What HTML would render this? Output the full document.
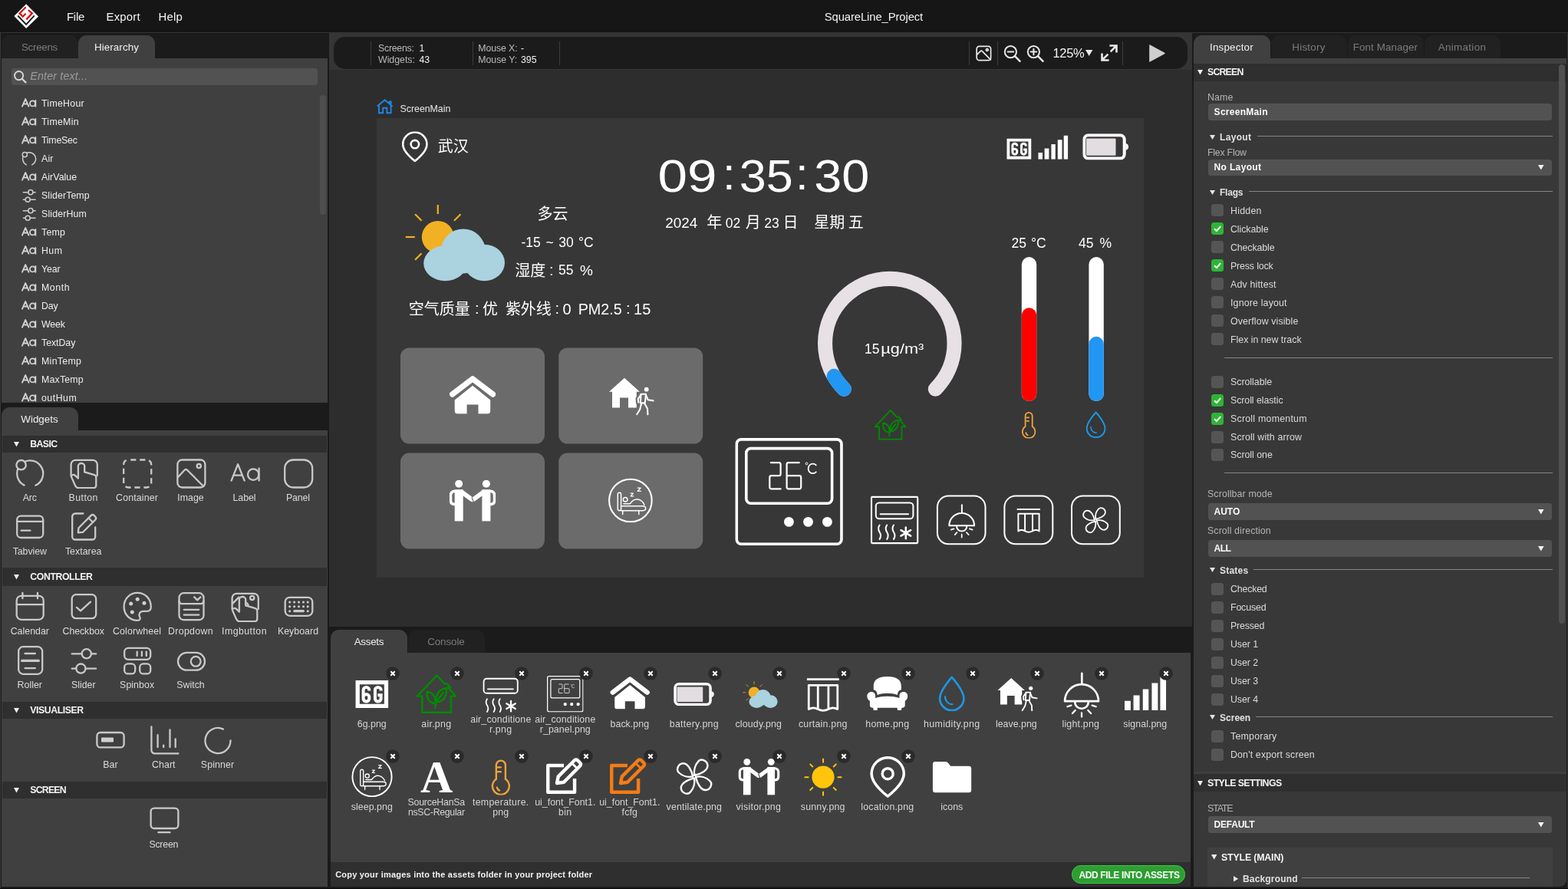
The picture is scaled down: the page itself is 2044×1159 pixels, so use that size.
<!DOCTYPE html>
<html lang="en"><head><meta charset="utf-8"><title>SquareLine_Project</title>
<style>
html,body{margin:0;padding:0;background:#191919;}
body{width:2044px;height:1159px;position:relative;overflow:hidden;filter:opacity(1);font-family:"Liberation Sans",sans-serif;}
.t{position:absolute;white-space:nowrap;margin:0;padding:0;}
.b{position:absolute;display:block;overflow:visible;}
svg{overflow:visible;}
</style></head><body>
<svg width="0" height="0" style="position:absolute;left:-10px;top:-10px"><defs><symbol id="w-arc" viewBox="0 0 40 40"><g fill="none" stroke-linecap="round" stroke-linejoin="round"><path d="M12.6 35.6A17 17 0 1 1 27.4 35.8"/><circle cx="8.6" cy="9.2" r="6.2" fill="#404040"/></g></symbol><symbol id="w-button" viewBox="0 0 40 40"><g fill="none" stroke-linecap="round" stroke-linejoin="round"><path d="M3.6 23.5V8.8a6 6 0 0 1 6-6H31.8a6 6 0 0 1 6 6V23"/><path d="M12.9 26.6V10.6a4.15 3.6 0 0 1 8.3 0V18.4L33.9 22.2q2.4 .8 2.4 3.4V35.4q0 3.7-3.7 3.7H13.2q-2.7 0-3.9-2.5L4.4 25.6q-1-2.9 1.6-3.6 1.6-.4 3 .9Z"/></g></symbol><symbol id="w-container" viewBox="0 0 40 40"><g fill="none" stroke-linecap="round" stroke-linejoin="round"><rect x="2.2" y="2.5" width="36" height="36" rx="6" stroke-dasharray="7.2 4.8" stroke-dashoffset="-3" stroke-linecap="butt"/></g></symbol><symbol id="w-image" viewBox="0 0 40 40"><g fill="none" stroke-linecap="round" stroke-linejoin="round"><rect x="2.4" y="2.5" width="36" height="36" rx="6"/><circle cx="30.3" cy="10.6" r="2.6"/><path d="M2.9 25.2L11.6 15.8q1.7-1.7 3.4 0L36.3 37"/></g></symbol><symbol id="w-label" viewBox="0 0 40 40"><g fill="none" stroke-linecap="round" stroke-linejoin="round"><path d="M2.6 29.6L11.1 8.2L19.7 29.6M5.4 22.6H16.8"/><circle cx="31.2" cy="21.6" r="7.2"/><path d="M38.6 13.6V29.6"/></g></symbol><symbol id="w-panel" viewBox="0 0 40 40"><g fill="none" stroke-linecap="round" stroke-linejoin="round"><rect x="2.2" y="2.5" width="36" height="36" rx="11"/></g></symbol><symbol id="w-tabview" viewBox="0 0 40 40"><g fill="none" stroke-linecap="round" stroke-linejoin="round"><rect x="3.2" y="5.6" width="34" height="28.4" rx="5"/><path d="M3.2 12.8H37.2M8.6 24.7H20.4"/></g></symbol><symbol id="w-textarea" viewBox="0 0 40 40"><g fill="none" stroke-linecap="round" stroke-linejoin="round"><path d="M19.4 2.5H9.2a4 4 0 0 0-4 4V32.5a4 4 0 0 0 4 4H31.2a4 4 0 0 0 4-4V20.4"/><path d="M12.8 27.4l.7-6.2L29.6 5.1a3 3 0 0 1 4.2 0l1.4 1.4a3 3 0 0 1 0 4.2L19.1 26.8Z"/><path d="M26.4 8.2l5.6 5.6"/></g></symbol><symbol id="w-calendar" viewBox="0 0 40 40"><g fill="none" stroke-linecap="round" stroke-linejoin="round"><rect x="2.7" y="5.8" width="35" height="31" rx="6"/><path d="M2.7 17.1H37.7M10.4 2V9.2M30 2V9.2"/></g></symbol><symbol id="w-checkbox" viewBox="0 0 40 40"><g fill="none" stroke-linecap="round" stroke-linejoin="round"><rect x="4.7" y="4.2" width="31.5" height="31" rx="5.5"/><path d="M10.9 20.9L16 25.4L29 13.6"/></g></symbol><symbol id="w-colorwheel" viewBox="0 0 40 40"><g fill="none" stroke-linecap="round" stroke-linejoin="round"><path d="M20.2 1.9C9.8 1.9 2.6 10 2.6 20C2.6 30.4 10.6 37.9 20.2 37.9C23.2 37.9 24.6 36 23.2 33.4C21.2 29.8 23.4 25.8 27.8 25.8H32.6C36 25.8 37.8 23.6 37.8 20.2C37.8 9.8 30.4 1.9 20.2 1.9Z"/><g fill="#d0d0d0" stroke="none"><circle cx="20.2" cy="10.2" r="2.5"/><circle cx="11.7" cy="16.1" r="2.5"/><circle cx="29" cy="15.2" r="2.5"/><circle cx="13.3" cy="26.9" r="2.5"/></g></g></symbol><symbol id="w-dropdown" viewBox="0 0 40 40"><g fill="none" stroke-linecap="round" stroke-linejoin="round"><rect x="4.5" y="2.2" width="32" height="35" rx="6"/><path d="M4.5 12.6q0 3.6 3.6 3.6H32.9q3.6 0 3.6-3.6M24.2 7.4L28.3 11.4L32.4 7.4M10.7 23.8H30.3M10.7 30.6H30.3"/></g></symbol><symbol id="w-imgbutton" viewBox="0 0 40 40"><g fill="none" stroke-linecap="round" stroke-linejoin="round"><path d="M3.6 23.5V8.8a6 6 0 0 1 6-6H31.8a6 6 0 0 1 6 6V23"/><path d="M12.9 26.6V10.6a4.15 3.6 0 0 1 8.3 0V18.4L33.9 22.2q2.4 .8 2.4 3.4V35.4q0 3.7-3.7 3.7H13.2q-2.7 0-3.9-2.5L4.4 25.6q-1-2.9 1.6-3.6 1.6-.4 3 .9Z" fill="#404040"/><path d="M4.4 15.6L12.4 7.6M21.4 14.2q2.6 1.4 3.2 3.8"/><circle cx="29.7" cy="8.4" r="2.6"/></g></symbol><symbol id="w-keyboard" viewBox="0 0 40 40"><g fill="none" stroke-linecap="round" stroke-linejoin="round"><rect x="2.7" y="7.8" width="35.6" height="24" rx="6"/><path d="M14.8 25.7H26.4" stroke-width="3.2"/><g fill="#d0d0d0" stroke="none"><circle cx="8.7" cy="14" r="1.5"/><circle cx="14.6" cy="14" r="1.5"/><circle cx="20.5" cy="14" r="1.5"/><circle cx="26.5" cy="14" r="1.5"/><circle cx="32.2" cy="14" r="1.5"/><circle cx="8.7" cy="19.8" r="1.5"/><circle cx="14.6" cy="19.8" r="1.5"/><circle cx="20.5" cy="19.8" r="1.5"/><circle cx="26.5" cy="19.8" r="1.5"/><circle cx="32.2" cy="19.8" r="1.5"/><circle cx="8.7" cy="25.7" r="1.5"/><circle cx="32.2" cy="25.7" r="1.5"/></g></g></symbol><symbol id="w-roller" viewBox="0 0 40 40"><g fill="none" stroke-linecap="round" stroke-linejoin="round"><rect x="5.2" y="2.2" width="31" height="35.6" rx="6"/><path d="M13.5 11H26.9M13.5 30.1H26.9"/><path d="M9.6 20.4H31.4" stroke-width="3.2"/></g></symbol><symbol id="w-slider" viewBox="0 0 40 40"><g fill="none" stroke-linecap="round" stroke-linejoin="round"><path d="M4.7 11.3H17.6M30 11.3H36.2M4.7 30.6H10.2M22.6 30.6H36.2"/><circle cx="23.8" cy="11.3" r="6.1"/><circle cx="16.4" cy="30.6" r="6.1"/></g></symbol><symbol id="w-spinbox" viewBox="0 0 40 40"><g fill="none" stroke-linecap="round" stroke-linejoin="round"><rect x="3.2" y="3.8" width="34" height="15" rx="5"/><path d="M19.7 8.6V14M25.9 8.6V14M31.8 8.6V14"/><rect x="3.2" y="24.4" width="14" height="13" rx="4.5"/><rect x="23.2" y="24.4" width="14" height="13" rx="4.5"/></g></symbol><symbol id="w-switch" viewBox="0 0 40 40"><g fill="none" stroke-linecap="round" stroke-linejoin="round"><rect x="3" y="9.9" width="35" height="22.8" rx="11.4"/><circle cx="26.2" cy="21.3" r="6.4"/></g></symbol><symbol id="w-bar" viewBox="0 0 40 40"><g fill="none" stroke-linecap="round" stroke-linejoin="round"><rect x="2.4" y="10" width="35.2" height="19.4" rx="4.5"/><rect x="8" y="16.6" width="16" height="5.8" rx="1" fill="#d0d0d0" stroke="none"/></g></symbol><symbol id="w-chart" viewBox="0 0 40 40"><g fill="none" stroke-linecap="round" stroke-linejoin="round"><path d="M3.4 2.4V33a4.4 4.4 0 0 0 4.4 4.4H38.4M11.6 13.2V29M19.2 26.6V29M27.5 6.4V29M34.7 18.4V29"/></g></symbol><symbol id="w-spinner" viewBox="0 0 40 40"><g fill="none" stroke-linecap="round" stroke-linejoin="round"><path d="M36.5 20.5A16.5 16.5 0 1 1 27 5.6"/></g></symbol><symbol id="w-screen" viewBox="0 0 40 40"><g fill="none" stroke-linecap="round" stroke-linejoin="round"><rect x="2.6" y="4.6" width="35.8" height="26.4" rx="4.5"/><path d="M12.4 36.2H27.6"/></g></symbol><symbol id="h-label" viewBox="0 0 20 12"><g fill="none" stroke-linecap="round" stroke-linejoin="round"><path d="M1 10.7L5.2 1.1L9.4 10.7M2.6 7.5H7.8"/><circle cx="14.5" cy="6.9" r="3.5"/><path d="M18.3 3V10.7"/></g></symbol><symbol id="s-6g" viewBox="0 0 32.2 27.3"><path fill-rule="evenodd" fill="#fff" d="M0 0H32.2V27.3H0ZM4 4V23.3H28.2V4Z"/><g fill="none" stroke="#fff" stroke-width="3"><path d="M13.4 10.2V9.4a2.9 2.6 0 0 0-5.8 0V18.2a2.9 2.6 0 0 0 5.8 0V16.2a2.9 2.4 0 0 0-5.8 0"/><path d="M25 10.2V9.4a2.9 2.6 0 0 0-5.8 0V18.2a2.9 2.6 0 0 0 5.8 0V14.6H21.8"/></g></symbol><symbol id="s-signal" viewBox="0 0 39 31.3"><path fill="#fff" d="M0 22.5h5.7v8.8H0zM8.3 17.2h5.8v14.1H8.3zM17.1 11.5h5.4v19.8h-5.4zM25.5 5.8h5.7v25.5h-5.7zM33.4 0h5.6v31.3h-5.6z"/></symbol><symbol id="s-battery" viewBox="0 0 60 34.4"><rect x="2" y="2" width="52.4" height="30.4" rx="5.5" fill="none" stroke="#fff" stroke-width="4"/><path d="M56 12.6q3.8 1.2 3.8 4.6t-3.8 4.6z" fill="#fff"/><rect x="4.8" y="6.4" width="38.4" height="22.2" rx="1" fill="#e1dde1"/></symbol><symbol id="s-location" viewBox="0 0 34.1 40.1"><g fill="none" stroke="#fff" stroke-width="2.6" stroke-linejoin="round"><path d="M17.05 38.6C17.05 38.6 1.4 27.2 1.4 16.9A15.65 15.65 0 0 1 32.7 16.9C32.7 27.2 17.05 38.6 17.05 38.6Z"/><circle cx="17.05" cy="16.8" r="5.2"/></g></symbol><symbol id="s-cloudy" viewBox="0 0 131 100"><g stroke="#f2b124" stroke-width="2.2" fill="none"><path d="M72.8 42.0L84.8 42.0"/><path d="M64.0 63.2L72.5 71.7"/><path d="M42.8 72.0L42.8 84.0"/><path d="M21.6 63.2L13.1 71.7"/><path d="M12.8 42.0L0.8 42.0"/><path d="M21.6 20.8L13.1 12.3"/><path d="M42.8 12.0L42.8 0.0"/><path d="M64.0 20.8L72.5 12.3"/></g><circle cx="42.8" cy="42" r="21" fill="#f2b124"/><g fill="#aad3df"><circle cx="75.8" cy="60.4" r="29"/><ellipse cx="52.4" cy="76.3" rx="28.2" ry="23"/><ellipse cx="103.4" cy="75.5" rx="26.6" ry="23.8"/></g></symbol><symbol id="s-home" viewBox="0 0 60.5 50"><path d="M3.9 24.2L30.3 4.1L56.7 24.2" fill="none" stroke="#fff" stroke-width="7.4" stroke-linecap="round" stroke-linejoin="round"/><path fill="#fff" d="M30.3 13L53.4 31.6V46a3.6 3.6 0 0 1-3.6 3.6H37.7V37.7H22.8V49.6H10.5a3.6 3.6 0 0 1-3.6-3.6V31.6Z"/></symbol><symbol id="s-leave" viewBox="0 0 59 49"><path fill="#fff" fill-rule="evenodd" d="M20 0L39.9 17.9H35.8V38.7H4V17.9H0ZM14 25.8V38.7H25V25.8Z"/><g fill="none" stroke-linecap="round" stroke-linejoin="round"><g stroke="var(--bg,#6b6b6b)" stroke-width="6"><path d="M41.5 21L47.5 21L46.6 32.6L40.6 32.6ZM41.5 21.5L37.6 27L38 32M46 33L50 40L50.5 47.6M42 33L40 41L36 47.4"/></g><circle cx="48.7" cy="14.9" r="3.9" fill="var(--bg,#6b6b6b)" stroke="none"/><g stroke="#fff" stroke-width="2.1"><path d="M41.6 21L48 21L46.8 32.6L40.8 32.6Z"/><path d="M48 22L50.6 28.4L57.6 29.6M41.6 21.6L37.8 27L38.2 31.8M46 33L50 40L50.4 47.6M42.2 33L40.2 41L36.2 47.4"/></g></g><circle cx="48.7" cy="14.9" r="2.9" fill="#fff"/></symbol><symbol id="s-visitor" viewBox="0 0 60.5 54.5"><g fill="#fff"><circle cx="12.4" cy="4.9" r="5"/><rect x="6.9" y="12.4" width="11" height="41.2"/><path d="M6.9 14.4Q1.7 15 1.7 20V27Q1.7 31 6.0 31.6" fill="none" stroke="#fff" stroke-width="3.6" stroke-linecap="round"/><path d="M16.0 15.600L29.2 25.400" fill="none" stroke="#fff" stroke-width="5.800" stroke-linecap="round"/><circle cx="48.1" cy="4.9" r="5"/><rect x="42.6" y="12.4" width="11" height="41.2"/><path d="M53.6 14.4Q58.8 15 58.8 20V27Q58.8 31 54.5 31.6" fill="none" stroke="#fff" stroke-width="3.6" stroke-linecap="round"/><path d="M44.5 15.600L31.3 25.400" fill="none" stroke="#fff" stroke-width="5.800" stroke-linecap="round"/></g><path d="M29.2 22.4L31.6 28.6" stroke="var(--bg,#6b6b6b)" stroke-width="1.2"/></symbol><symbol id="s-sleep" viewBox="0 0 58 58"><g fill="none" stroke="#fff" stroke-linecap="round" stroke-linejoin="round"><circle cx="29" cy="29" r="27.8" stroke-width="2.1"/><g stroke-width="1.5"><rect x="12.4" y="18.8" width="4.3" height="23.4" rx="2.15"/><path d="M16.7 36.2H44.6q4.2 0 4.2 3t-4.2 3H16.7M18.8 42.4V47M39.9 42.4V47"/><circle cx="22.2" cy="27.8" r="2.8"/><path d="M20 33.2H28.4Q33 26.6 38.6 27.6T47 34.6"/><path d="M29.2 19.6H32.6L29.2 23.4H32.8M38.4 12.6H42.2L38.4 16.8H42.4" stroke-width="1.3"/></g></g></symbol><symbol id="s-acpanel" viewBox="0 0 140.6 140.2"><g fill="none" stroke="#fff"><rect x="1.9" y="1.9" width="136.8" height="136.4" rx="6" stroke-width="3.7"/><rect x="14.5" y="13.6" width="111.8" height="71.6" rx="6" stroke-width="3.6"/><g stroke-width="2.2" stroke-linecap="round"><path d="M46.6 32.2H57q2.3 0 2.3 2.3V46.9q0 2.3-2.3 2.3H47.3q-2.3 0-2.3 2.3V64q0 2.3 2.3 2.3H59.4"/><path d="M83.4 32.2H69.6q-2.3 0-2.3 2.3V64q0 2.3 2.3 2.3H83.6q2.3 0 2.3-2.3V51.5q0-2.3-2.3-2.3H67.3"/></g><circle cx="93.2" cy="33.4" r="1.4" stroke-width="1"/><path d="M106 36A6 6.3 0 1 0 106 43.8" stroke-width="1.8"/></g><g fill="#fff"><circle cx="70.1" cy="109.4" r="6.4"/><circle cx="95.2" cy="109.4" r="6.4"/><circle cx="120.1" cy="109.4" r="6.4"/></g></symbol><symbol id="s-air" viewBox="0 0 41 40"><g fill="none" stroke="#008a00" stroke-width="1.900" stroke-linecap="round" stroke-linejoin="round"><path d="M1 22.400L20.900 1.200L29.400 10.200M32.400 13.600L40.400 22.400M31 9.400L34.800 13.400"/><path d="M1 22.400H6.100V39H35.500V22.400H40.400"/><path d="M19.300 34.400L20 28.500M19.700 29.800C13 29.800 10.600 24 11 18C16 18.400 19.600 22 19.700 29.800M20.200 28.500C27 28.500 31.600 23 30.800 14.100C24 15 19.600 20 20.200 28.500L27.600 18.600"/></g></symbol><symbol id="s-temp" viewBox="0 0 19 35"><g fill="none" stroke="#f2a33c" stroke-width="1.8" stroke-linecap="round"><path d="M4.9 19.4V5.8a4.55 4.55 0 0 1 9.1 0V19.4A8.3 8.3 0 1 1 4.9 19.4Z"/><path d="M6.4 7.8H9.4M6.4 12.2H9.4M5.6 27.6A4.4 4.4 0 0 0 8 30.6"/></g></symbol><symbol id="s-drop" viewBox="0 0 26 35.5"><g fill="none" stroke="#1e96e6" stroke-width="2" stroke-linecap="round" stroke-linejoin="round"><path d="M13 1.5C13 1.5 1.1 14.6 1.1 22.4A11.9 11.9 0 0 0 24.9 22.4C24.9 14.6 13 1.5 13 1.5Z"/><path d="M6.3 20.6A7.6 7.6 0 0 0 13.6 28.4" stroke-width="1.6"/></g></symbol><symbol id="s-ac" viewBox="0 0 62 62"><g fill="none" stroke="#fff" stroke-width="2" stroke-linecap="round"><rect x="6.8" y="8.5" width="48.6" height="20.9" rx="4.2"/><path d="M12.6 23.4H49"/><path d="M11.6 37.6q-3 4.6 0 9.2t0 9.2M21.2 37.6q-3 4.6 0 9.2t0 9.2M30 37.6q-3 4.6 0 9.2t0 9.2"/><path d="M45.8 40.6V55.4M39.4 44.3L52.2 51.7M52.2 44.3L39.4 51.7" stroke-width="2.5"/></g></symbol><symbol id="s-light" viewBox="0 0 64.6 64.7"><g fill="none" stroke="#fff" stroke-width="2" stroke-linecap="round" stroke-linejoin="round"><path d="M33 12.6V23.2M16.4 39.7A16.4 16.4 0 0 1 49.2 39.7ZM26.2 40.6A6.6 6.4 0 0 0 39.4 40.6"/><path d="M32.8 51V55M39 48.6L41.8 51.6M26.6 48.6L23.8 51.6M43 43.8L46.8 45M22.600 43.8L18.8 45" stroke-width="1.7"/></g></symbol><symbol id="s-curtain" viewBox="0 0 64.9 64.7"><g fill="none" stroke="#fff" stroke-width="2" stroke-linejoin="round"><path d="M17.3 18.5H47.6M19 24.2H46.2V46.8q-4.2-2.600-8.600 0q-5 2.6-9.900 0q-4.400-2.600-8.700 0ZM27.7 24.2V46.2M37.6 24.2V46.2"/></g></symbol><symbol id="s-fan" viewBox="0 0 64.8 64.7"><g fill="none" stroke="#fff" stroke-width="1.900" stroke-linejoin="round"><path transform="translate(32.2 32.6) rotate(8) scale(.92)" d="M0 -1.600C-1.600 -6 -1.200 -12 2 -16.500C4.500 -20 11 -18.500 12 -13.500C13 -8.500 6 -3.600 0 -1.600Z"/><path transform="translate(32.2 32.6) rotate(98) scale(.92)" d="M0 -1.600C-1.600 -6 -1.200 -12 2 -16.500C4.500 -20 11 -18.500 12 -13.500C13 -8.500 6 -3.600 0 -1.600Z"/><path transform="translate(32.2 32.6) rotate(188) scale(.92)" d="M0 -1.600C-1.600 -6 -1.200 -12 2 -16.500C4.500 -20 11 -18.500 12 -13.500C13 -8.500 6 -3.600 0 -1.600Z"/><path transform="translate(32.2 32.6) rotate(278) scale(.92)" d="M0 -1.600C-1.600 -6 -1.200 -12 2 -16.500C4.500 -20 11 -18.500 12 -13.500C13 -8.500 6 -3.600 0 -1.600Z"/><circle cx="32.2" cy="32.6" r="1.500" stroke-width="1.200"/></g></symbol><symbol id="s-sunny" viewBox="0 0 50 50"><g stroke="#ffc40c" stroke-width="2" fill="none"><path d="M43.6 25.0L49.4 25.0"/><path d="M38.2 38.2L42.3 42.3"/><path d="M25.0 43.6L25.0 49.4"/><path d="M11.8 38.2L7.7 42.3"/><path d="M6.4 25.0L0.6 25.0"/><path d="M11.8 11.8L7.7 7.7"/><path d="M25.0 6.4L25.0 0.6"/><path d="M38.2 11.8L42.3 7.7"/></g><circle cx="25" cy="25" r="14.6" fill="#ffc40c"/></symbol><symbol id="s-folder" viewBox="0 0 52 42"><path fill="#fff" d="M3.600 0H17.4q2 0 3.2 1.600L24 6H48.400a3.600 3.600 0 0 1 3.600 3.600V38.400a3.600 3.600 0 0 1-3.600 3.600H3.600a3.600 3.600 0 0 1-3.600-3.600V3.600a3.600 3.600 0 0 1 3.600-3.600Z"/></symbol><symbol id="s-sofa" viewBox="0 0 54 46"><path fill="#fff" d="M8.600 17.600V12.400C8.600 4.400 15 0 27 0S45.400 4.400 45.400 12.400V17.600C42 18.400 40.600 20.600 40.400 24.400C32 21.600 22 21.600 13.600 24.400C13.400 20.600 12 18.400 8.600 17.600Z"/><path fill="#fff" d="M5.600 20.400C9 20.400 11 22.600 11 26V28.600C21 25.400 33 25.400 43 28.600V26C43 22.600 45 20.400 48.400 20.400C52 20.400 54 23 54 26C54 29 52.600 31 50.400 32.400V38C50.400 40.400 49 41.600 46.600 41.600H46L45.400 45H40.600L40 41.600H14L13.400 45H8.600L8 41.600H7.400C5 41.600 3.600 40.400 3.600 38V32.400C1.400 31 0 29 0 26C0 23 2 20.400 5.600 20.400Z"/></symbol><symbol id="s-fonta" viewBox="0 0 44 46"><text x="22" y="44" text-anchor="middle" font-family="Liberation Serif,serif" font-weight="bold" font-size="61" fill="#fff">A</text></symbol><symbol id="s-edit-w" viewBox="-2 -3 54 52"><g fill="none" stroke="#fff" stroke-width="4.6" stroke-linejoin="round"><path d="M24 8.400H2.400V44.600H38.600V26"/><path d="M14.600 32.400L16.400 23.400L38.400 1.400a3 3 0 0 1 4.200 0L46 4.800a3 3 0 0 1 0 4.200L24 31Z"/><path d="M35 5.400L42 12.400" stroke-width="3"/></g></symbol><symbol id="s-edit-o" viewBox="-2 -3 54 52"><g fill="none" stroke="#f57c14" stroke-width="4.6" stroke-linejoin="round"><path d="M24 8.400H2.400V44.600H38.600V26"/><path d="M14.600 32.400L16.400 23.400L38.400 1.400a3 3 0 0 1 4.200 0L46 4.800a3 3 0 0 1 0 4.200L24 31Z"/><path d="M35 5.400L42 12.400" stroke-width="3"/></g></symbol></defs></svg>
<div class="b" style="left:0px;top:0px;width:2044px;height:42px;background:#161616;"></div>
<div class="b" style="left:0px;top:42px;width:2044px;height:1px;background:#343434;"></div>
<svg class="b" style="left:17px;top:4px;" width="35" height="35" viewBox="0 0 35 35"><path d="M17.1 1.300L33.100 17.600L17.100 33.100L1.400 17Z" fill="#fff"/><path d="M6.200 16.500L17.100 27.900L27.800 16.300" fill="none" stroke="#161616" stroke-width="1.900"/><path d="M16.700 5.300L8.600 13.400L12.750 17.700L16.600 13.700M19.800 9.200L24.900 13.400L17.300 21.400" fill="none" stroke="#dc1414" stroke-width="2.300"/></svg>
<div class="t" style="left:87px;top:11.9px;font-size:14.94px;line-height:20px;letter-spacing:-0.28px;color:#f2f2f2;">File</div>
<div class="t" style="left:138.5px;top:11.9px;font-size:14.94px;line-height:20px;letter-spacing:0.2px;color:#f2f2f2;">Export</div>
<div class="t" style="left:206.5px;top:11.9px;font-size:14.94px;line-height:20px;letter-spacing:0.17px;color:#f2f2f2;">Help</div>
<div class="t" style="left:1074.82px;top:11.9px;font-size:14.83px;line-height:20px;letter-spacing:-0.11px;color:#f2f2f2;">SquareLine_Project</div>
<div class="b" style="left:0px;top:43px;width:1px;height:1116px;background:#3a3a3a;"></div>
<div class="b" style="left:2px;top:45px;width:426px;height:480px;background:#1b1b1b;"></div>
<div class="b" style="left:2px;top:46px;width:99.5px;height:30px;background:#212121;border-radius:11px 11px 0 0;"></div>
<div class="b" style="left:102px;top:46px;width:100px;height:31px;background:#404040;border-radius:11px 11px 0 0;"></div>
<div class="b" style="left:2px;top:76px;width:425.1px;height:448.8px;background:#404040;"></div>
<div class="t" style="left:27.93px;top:54.1px;font-size:13.39px;line-height:16px;letter-spacing:-0.28px;color:#7b7b7b;">Screens</div>
<div class="t" style="left:122.89px;top:54.1px;font-size:13.39px;line-height:16px;letter-spacing:0.1px;color:#f0f0f0;">Hierarchy</div>
<div class="b" style="left:15px;top:89px;width:399px;height:22px;background:#525252;border-radius:4px;"></div>
<svg class="b" style="left:17px;top:90.5px;" width="18" height="18" viewBox="0 0 18 18"><circle cx="7.6" cy="7.6" r="5.6" fill="none" stroke="#d8d8d8" stroke-width="1.9"/><path d="M11.8 11.8L16.4 16.4" stroke="#d8d8d8" stroke-width="2.2" stroke-linecap="round"/></svg>
<div class="t" style="left:39.3px;top:90.2px;font-size:14.33px;line-height:18px;letter-spacing:0.13px;color:#9a9a9a;font-style:italic;">Enter text...</div>
<div class="b" style="left:417px;top:124px;width:7.8px;height:156px;background:#4e4e4e;border-radius:3.900px;"></div>
<div class="b" style="left:2px;top:120px;width:414px;height:405px;overflow:hidden">
<svg class="b" style="left:26px;top:8.1px;stroke:#d2d2d2;stroke-width:1.9" width="20" height="12"><use href="#h-label"/></svg>
<div class="t" style="left:52px;top:6.9px;font-size:12.36px;line-height:16px;letter-spacing:0.27px;color:#ececec;">TimeHour</div>
<svg class="b" style="left:26px;top:32.1px;stroke:#d2d2d2;stroke-width:1.9" width="20" height="12"><use href="#h-label"/></svg>
<div class="t" style="left:52px;top:30.9px;font-size:12.36px;line-height:16px;letter-spacing:0.27px;color:#ececec;">TimeMin</div>
<svg class="b" style="left:26px;top:56.1px;stroke:#d2d2d2;stroke-width:1.9" width="20" height="12"><use href="#h-label"/></svg>
<div class="t" style="left:52px;top:54.9px;font-size:12.36px;line-height:16px;letter-spacing:-0.24px;color:#ececec;">TimeSec</div>
<svg class="b" style="left:25.9px;top:76.5px;stroke:#cfcfcf;stroke-width:3" width="20" height="20"><use href="#w-arc"/></svg>
<div class="t" style="left:52px;top:78.9px;font-size:12.36px;line-height:16px;letter-spacing:0.14px;color:#ececec;">Air</div>
<svg class="b" style="left:26px;top:104.1px;stroke:#d2d2d2;stroke-width:1.9" width="20" height="12"><use href="#h-label"/></svg>
<div class="t" style="left:52px;top:102.9px;font-size:12.36px;line-height:16px;letter-spacing:0.05px;color:#ececec;">AirValue</div>
<svg class="b" style="left:26.2px;top:124.5px;stroke:#cfcfcf;stroke-width:3" width="20" height="20"><use href="#w-slider"/></svg>
<div class="t" style="left:52px;top:126.9px;font-size:12.36px;line-height:16px;letter-spacing:0.09px;color:#ececec;">SliderTemp</div>
<svg class="b" style="left:26.2px;top:148.5px;stroke:#cfcfcf;stroke-width:3" width="20" height="20"><use href="#w-slider"/></svg>
<div class="t" style="left:52px;top:150.9px;font-size:12.36px;line-height:16px;letter-spacing:0.15px;color:#ececec;">SliderHum</div>
<svg class="b" style="left:26px;top:176.1px;stroke:#d2d2d2;stroke-width:1.9" width="20" height="12"><use href="#h-label"/></svg>
<div class="t" style="left:52px;top:174.9px;font-size:12.36px;line-height:16px;letter-spacing:0.21px;color:#ececec;">Temp</div>
<svg class="b" style="left:26px;top:200.1px;stroke:#d2d2d2;stroke-width:1.9" width="20" height="12"><use href="#h-label"/></svg>
<div class="t" style="left:52px;top:198.9px;font-size:12.36px;line-height:16px;letter-spacing:0.43px;color:#ececec;">Hum</div>
<svg class="b" style="left:26px;top:224.1px;stroke:#d2d2d2;stroke-width:1.9" width="20" height="12"><use href="#h-label"/></svg>
<div class="t" style="left:52px;top:222.9px;font-size:12.36px;line-height:16px;letter-spacing:-0.14px;color:#ececec;">Year</div>
<svg class="b" style="left:26px;top:248.1px;stroke:#d2d2d2;stroke-width:1.9" width="20" height="12"><use href="#h-label"/></svg>
<div class="t" style="left:52px;top:246.9px;font-size:12.36px;line-height:16px;letter-spacing:0.54px;color:#ececec;">Month</div>
<svg class="b" style="left:26px;top:272.1px;stroke:#d2d2d2;stroke-width:1.9" width="20" height="12"><use href="#h-label"/></svg>
<div class="t" style="left:52px;top:270.9px;font-size:12.36px;line-height:16px;letter-spacing:-0.17px;color:#ececec;">Day</div>
<svg class="b" style="left:26px;top:296.1px;stroke:#d2d2d2;stroke-width:1.9" width="20" height="12"><use href="#h-label"/></svg>
<div class="t" style="left:52px;top:294.9px;font-size:12.36px;line-height:16px;letter-spacing:-0.18px;color:#ececec;">Week</div>
<svg class="b" style="left:26px;top:320.1px;stroke:#d2d2d2;stroke-width:1.9" width="20" height="12"><use href="#h-label"/></svg>
<div class="t" style="left:52px;top:318.9px;font-size:12.36px;line-height:16px;letter-spacing:-0.05px;color:#ececec;">TextDay</div>
<svg class="b" style="left:26px;top:344.1px;stroke:#d2d2d2;stroke-width:1.9" width="20" height="12"><use href="#h-label"/></svg>
<div class="t" style="left:52px;top:342.9px;font-size:12.36px;line-height:16px;letter-spacing:0.31px;color:#ececec;">MinTemp</div>
<svg class="b" style="left:26px;top:368.1px;stroke:#d2d2d2;stroke-width:1.9" width="20" height="12"><use href="#h-label"/></svg>
<div class="t" style="left:52px;top:366.9px;font-size:12.36px;line-height:16px;letter-spacing:0.18px;color:#ececec;">MaxTemp</div>
<svg class="b" style="left:26px;top:392.1px;stroke:#d2d2d2;stroke-width:1.9" width="20" height="12"><use href="#h-label"/></svg>
<div class="t" style="left:52px;top:390.9px;font-size:12.36px;line-height:16px;letter-spacing:0.49px;color:#ececec;">outHum</div>
</div>
<div class="b" style="left:2px;top:525px;width:426px;height:634px;background:#1b1b1b;"></div>
<div class="b" style="left:2px;top:531px;width:100px;height:30px;background:#404040;border-radius:11px 11px 0 0;"></div>
<div class="t" style="left:27.25px;top:539.1px;font-size:13.39px;line-height:16px;letter-spacing:0.02px;color:#f0f0f0;">Widgets</div>
<div class="b" style="left:2px;top:560.7px;width:425.1px;height:595.8px;background:#404040;"></div>
<div class="b" style="left:3px;top:567.7px;width:423px;height:22px;background:#2f2f2f;"></div>
<svg class="b" style="left:17.5px;top:575.7px;" width="7" height="6.4" viewBox="0 0 7 6.4"><path d="M0 0H7 L3.5 6.4Z" fill="#f0f0f0"/></svg>
<div class="t" style="left:39.3px;top:570.7px;font-size:12.3px;line-height:16px;letter-spacing:-0.62px;color:#f4f4f4;font-weight:bold;">BASIC</div>
<div class="b" style="left:3px;top:740.2px;width:423px;height:23.6px;background:#2f2f2f;"></div>
<svg class="b" style="left:17.5px;top:749px;" width="7" height="6.4" viewBox="0 0 7 6.4"><path d="M0 0H7 L3.5 6.4Z" fill="#f0f0f0"/></svg>
<div class="t" style="left:39.3px;top:744px;font-size:12.3px;line-height:16px;letter-spacing:-0.41px;color:#f4f4f4;font-weight:bold;">CONTROLLER</div>
<div class="b" style="left:3px;top:914.8px;width:423px;height:22.7px;background:#2f2f2f;"></div>
<svg class="b" style="left:17.5px;top:923.15px;" width="7" height="6.4" viewBox="0 0 7 6.4"><path d="M0 0H7 L3.5 6.4Z" fill="#f0f0f0"/></svg>
<div class="t" style="left:39.3px;top:918.15px;font-size:12.3px;line-height:16px;letter-spacing:-0.45px;color:#f4f4f4;font-weight:bold;">VISUALISER</div>
<div class="b" style="left:3px;top:1018.8px;width:423px;height:22.7px;background:#2f2f2f;"></div>
<svg class="b" style="left:17.5px;top:1027.15px;" width="7" height="6.4" viewBox="0 0 7 6.4"><path d="M0 0H7 L3.5 6.4Z" fill="#f0f0f0"/></svg>
<div class="t" style="left:39.3px;top:1022.15px;font-size:12.3px;line-height:16px;letter-spacing:-0.79px;color:#f4f4f4;font-weight:bold;">SCREEN</div>
<svg class="b" style="left:19px;top:596.6px;stroke:#c9c9c9;stroke-width:2.3" width="40" height="40"><use href="#w-arc"/></svg>
<div class="t" style="left:29.82px;top:641.2px;font-size:12.36px;line-height:16px;letter-spacing:-0.19px;color:#dadada;">Arc</div>
<svg class="b" style="left:88.9px;top:596.6px;stroke:#c9c9c9;stroke-width:2.3" width="40" height="40"><use href="#w-button"/></svg>
<div class="t" style="left:89.59px;top:641.2px;font-size:12.36px;line-height:16px;letter-spacing:0.42px;color:#dadada;">Button</div>
<svg class="b" style="left:158.8px;top:596.6px;stroke:#c9c9c9;stroke-width:2.3" width="40" height="40"><use href="#w-container"/></svg>
<div class="t" style="left:151.04px;top:641.2px;font-size:12.36px;line-height:16px;letter-spacing:0.17px;color:#dadada;">Container</div>
<svg class="b" style="left:228.7px;top:596.6px;stroke:#c9c9c9;stroke-width:2.3" width="40" height="40"><use href="#w-image"/></svg>
<div class="t" style="left:231.26px;top:641.2px;font-size:12.36px;line-height:16px;letter-spacing:0.03px;color:#dadada;">Image</div>
<svg class="b" style="left:298.7px;top:596.6px;stroke:#c9c9c9;stroke-width:2.3" width="40" height="40"><use href="#w-label"/></svg>
<div class="t" style="left:303.49px;top:641.2px;font-size:12.36px;line-height:16px;letter-spacing:-0.04px;color:#dadada;">Label</div>
<svg class="b" style="left:368.7px;top:596.6px;stroke:#c9c9c9;stroke-width:2.3" width="40" height="40"><use href="#w-panel"/></svg>
<div class="t" style="left:372.98px;top:641.2px;font-size:12.36px;line-height:16px;letter-spacing:-0.12px;color:#dadada;">Panel</div>
<svg class="b" style="left:19px;top:667.3px;stroke:#c9c9c9;stroke-width:2.3" width="40" height="40"><use href="#w-tabview"/></svg>
<div class="t" style="left:16.63px;top:711.1px;font-size:12.36px;line-height:16px;letter-spacing:-0.05px;color:#dadada;">Tabview</div>
<svg class="b" style="left:88.9px;top:667.3px;stroke:#c9c9c9;stroke-width:2.3" width="40" height="40"><use href="#w-textarea"/></svg>
<div class="t" style="left:84.92px;top:711.1px;font-size:12.36px;line-height:16px;letter-spacing:0.02px;color:#dadada;">Textarea</div>
<svg class="b" style="left:19px;top:771.2px;stroke:#c9c9c9;stroke-width:2.3" width="40" height="40"><use href="#w-calendar"/></svg>
<div class="t" style="left:13.65px;top:815.2px;font-size:12.36px;line-height:16px;letter-spacing:0.02px;color:#dadada;">Calendar</div>
<svg class="b" style="left:88.9px;top:771.2px;stroke:#c9c9c9;stroke-width:2.3" width="40" height="40"><use href="#w-checkbox"/></svg>
<div class="t" style="left:81.54px;top:815.2px;font-size:12.36px;line-height:16px;letter-spacing:-0.08px;color:#dadada;">Checkbox</div>
<svg class="b" style="left:158.8px;top:771.2px;stroke:#c9c9c9;stroke-width:2.3" width="40" height="40"><use href="#w-colorwheel"/></svg>
<div class="t" style="left:147px;top:815.2px;font-size:12.36px;line-height:16px;letter-spacing:0.14px;color:#dadada;">Colorwheel</div>
<svg class="b" style="left:228.7px;top:771.2px;stroke:#c9c9c9;stroke-width:2.3" width="40" height="40"><use href="#w-dropdown"/></svg>
<div class="t" style="left:218.97px;top:815.2px;font-size:12.36px;line-height:16px;letter-spacing:0.34px;color:#dadada;">Dropdown</div>
<svg class="b" style="left:298.7px;top:771.2px;stroke:#c9c9c9;stroke-width:2.3" width="40" height="40"><use href="#w-imgbutton"/></svg>
<div class="t" style="left:289.06px;top:815.2px;font-size:12.36px;line-height:16px;letter-spacing:0.44px;color:#dadada;">Imgbutton</div>
<svg class="b" style="left:368.7px;top:771.2px;stroke:#c9c9c9;stroke-width:2.3" width="40" height="40"><use href="#w-keyboard"/></svg>
<div class="t" style="left:361.9px;top:815.2px;font-size:12.36px;line-height:16px;letter-spacing:0.03px;color:#dadada;">Keyboard</div>
<svg class="b" style="left:19px;top:840.5px;stroke:#c9c9c9;stroke-width:2.3" width="40" height="40"><use href="#w-roller"/></svg>
<div class="t" style="left:22.62px;top:885.1px;font-size:12.36px;line-height:16px;letter-spacing:0.01px;color:#dadada;">Roller</div>
<svg class="b" style="left:88.9px;top:840.5px;stroke:#c9c9c9;stroke-width:2.3" width="40" height="40"><use href="#w-slider"/></svg>
<div class="t" style="left:92.88px;top:885.1px;font-size:12.36px;line-height:16px;letter-spacing:0.01px;color:#dadada;">Slider</div>
<svg class="b" style="left:158.8px;top:840.5px;stroke:#c9c9c9;stroke-width:2.3" width="40" height="40"><use href="#w-spinbox"/></svg>
<div class="t" style="left:156.11px;top:885.1px;font-size:12.36px;line-height:16px;letter-spacing:0.05px;color:#dadada;">Spinbox</div>
<svg class="b" style="left:228.7px;top:840.5px;stroke:#c9c9c9;stroke-width:2.3" width="40" height="40"><use href="#w-switch"/></svg>
<div class="t" style="left:230.37px;top:885.1px;font-size:12.36px;line-height:16px;letter-spacing:-0.02px;color:#dadada;">Switch</div>
<svg class="b" style="left:124.2px;top:945px;stroke:#c9c9c9;stroke-width:2.3" width="40" height="40"><use href="#w-bar"/></svg>
<div class="t" style="left:134.33px;top:989.1px;font-size:12.36px;line-height:16px;letter-spacing:0.04px;color:#dadada;">Bar</div>
<svg class="b" style="left:193.5px;top:945px;stroke:#c9c9c9;stroke-width:2.3" width="40" height="40"><use href="#w-chart"/></svg>
<div class="t" style="left:197.93px;top:989.1px;font-size:12.36px;line-height:16px;letter-spacing:0.1px;color:#dadada;">Chart</div>
<svg class="b" style="left:263.7px;top:945px;stroke:#c9c9c9;stroke-width:2.3" width="40" height="40"><use href="#w-spinner"/></svg>
<div class="t" style="left:261.83px;top:989.1px;font-size:12.36px;line-height:16px;letter-spacing:0.1px;color:#dadada;">Spinner</div>
<svg class="b" style="left:193.5px;top:1049px;stroke:#c9c9c9;stroke-width:2.3" width="40" height="40"><use href="#w-screen"/></svg>
<div class="t" style="left:194.41px;top:1093.1px;font-size:12.36px;line-height:16px;letter-spacing:-0.23px;color:#dadada;">Screen</div>
<div class="b" style="left:429px;top:43px;width:1125px;height:773.7px;background:#2d2d2d;"></div>
<div class="b" style="left:429px;top:43px;width:1125px;height:47.5px;background:#353535;"></div>
<div class="b" style="left:435px;top:48.1px;width:1113px;height:41.7px;background:#1b1b1b;border-radius:15px;"></div>
<div class="b" style="left:482.5px;top:53.5px;width:1px;height:31px;background:#3d3d3d;"></div>
<div class="b" style="left:615.9px;top:53.5px;width:1px;height:31px;background:#3d3d3d;"></div>
<div class="b" style="left:728.8px;top:53.5px;width:1px;height:31px;background:#3d3d3d;"></div>
<div class="b" style="left:1263.1px;top:53.5px;width:1px;height:31px;background:#3d3d3d;"></div>
<div class="b" style="left:1300px;top:53.5px;width:1px;height:31px;background:#3d3d3d;"></div>
<div class="b" style="left:1462.9px;top:53.5px;width:1px;height:31px;background:#3d3d3d;"></div>
<div class="t" style="left:493px;top:55.4px;font-size:12.36px;line-height:16px;letter-spacing:-0.26px;color:#b9b9b9;">Screens:</div>
<div class="t" style="left:546.5px;top:55.4px;font-size:12.36px;line-height:16px;letter-spacing:-0.01px;color:#f2f2f2;">1</div>
<div class="t" style="left:493px;top:70px;font-size:12.36px;line-height:16px;letter-spacing:-0.02px;color:#b9b9b9;">Widgets:</div>
<div class="t" style="left:546.5px;top:70px;font-size:12.36px;line-height:16px;letter-spacing:-0.01px;color:#f2f2f2;">43</div>
<div class="t" style="left:623.3px;top:55.4px;font-size:12.36px;line-height:16px;letter-spacing:-0.13px;color:#b9b9b9;">Mouse X:</div>
<div class="t" style="left:679px;top:55.4px;font-size:12.36px;line-height:16px;letter-spacing:-0.25px;color:#f2f2f2;">-</div>
<div class="t" style="left:623.3px;top:70px;font-size:12.36px;line-height:16px;letter-spacing:-0.05px;color:#b9b9b9;">Mouse Y:</div>
<div class="t" style="left:679px;top:70px;font-size:12.36px;line-height:16px;letter-spacing:-0.01px;color:#f2f2f2;">395</div>
<svg class="b" style="left:1271.6px;top:58.6px;" width="21" height="21" viewBox="0 0 21 21"><g fill="none" stroke="#e9e9e9" stroke-width="1.7" stroke-linejoin="round" stroke-linecap="round"><rect x="1.2" y="1.4" width="18.4" height="18.2" rx="3.4"/><path d="M1.4 12.4L6.200 7.600q1-1 2 0L19.400 18.800"/><circle cx="14.8" cy="6" r="1.4"/></g></svg>
<svg class="b" style="left:1307.8px;top:57.6px;" width="24" height="24" viewBox="0 0 24 24"><g fill="none" stroke="#e9e9e9" stroke-width="2" stroke-linecap="round"><circle cx="9.4" cy="9.6" r="7.6"/><path d="M15.2 15.4L21.6 21.8" stroke-width="2.4"/><path d="M5.600 9.600H13.200" stroke-width="2"/></g></svg>
<svg class="b" style="left:1338px;top:57.6px;" width="24" height="24" viewBox="0 0 24 24"><g fill="none" stroke="#e9e9e9" stroke-width="2" stroke-linecap="round"><circle cx="9.4" cy="9.6" r="7.6"/><path d="M15.2 15.4L21.6 21.8" stroke-width="2.4"/><path d="M5.600 9.600H13.200M9.400 5.800V13.400" stroke-width="2"/></g></svg>
<div class="t" style="left:1372.6px;top:59.4px;font-size:16.48px;line-height:20px;letter-spacing:-0.38px;color:#f2f2f2;">125%</div>
<svg class="b" style="left:1414.9px;top:65.4px;" width="9.4" height="8" viewBox="0 0 9.4 8"><path d="M0 0H9.4 L4.7 8Z" fill="#e9e9e9"/></svg>
<svg class="b" style="left:1434.6px;top:58px;" width="22" height="22" viewBox="0 0 22 22"><g fill="none" stroke="#e9e9e9" stroke-width="2.600" stroke-linecap="butt"><path d="M11.400 1.500H20.500V10.600M10.600 20.500H1.500V11.400M20 2L12.600 9.400M2 20L9.400 12.600"/></g></svg>
<svg class="b" style="left:1496.7px;top:56.6px;" width="23" height="25" viewBox="0 0 23 25"><path d="M2.200 1.400Q1.200 .8 1.200 2V23Q1.200 24.200 2.200 23.600L21.200 13.200Q22.200 12.500 21.200 11.800Z" fill="#cfcfcf"/></svg>
<svg class="b" style="left:491px;top:129.4px;" width="22" height="19.4" viewBox="0 0 22 19.4"><g fill="none" stroke="#1e88e5" stroke-width="1.9" stroke-linejoin="miter"><path d="M.8 9.600L10.600 1.200L16.600 6.400V3.400H18.600V8.100L20.600 9.600"/><path d="M3 8.400V18.200H8.200V11.800H13.400V18.200H18.600V8.400"/></g></svg>
<div class="t" style="left:521.6px;top:134px;font-size:12.36px;line-height:16px;letter-spacing:-0.03px;color:#e6e6e6;">ScreenMain</div>
<div class="b" style="left:491px;top:154px;width:1000px;height:599px;background:#373737;"></div>
<svg class="b" role="img" aria-label="ScreenMain 武汉 09:35:30 多云 -15 ~ 30 °C 湿度 : 55 % 空气质量 : 优 紫外线 : 0 PM2.5 : 15 2024 年 02 月 23 日 星期 五 25 °C 45 % 15 µg/m³" style="left:491px;top:154px" width="1000" height="599" viewBox="491 154 1000 599"><rect x="522" y="453.5" width="188" height="125" rx="11.5" fill="#6b6b6b"/><rect x="728.2" y="453.5" width="188" height="125" rx="11.5" fill="#6b6b6b"/><rect x="522" y="590.6" width="188" height="125" rx="11.5" fill="#6b6b6b"/><rect x="728.2" y="590.6" width="188" height="125" rx="11.5" fill="#6b6b6b"/><svg x="585.8" y="489.8" width="60.5" height="50"><use href="#s-home"/></svg><svg x="794" y="492.8" width="59" height="49" style="--bg:#6b6b6b"><use href="#s-leave"/></svg><svg x="585.8" y="625.8" width="60.5" height="54.5" style="--bg:#6b6b6b"><use href="#s-visitor"/></svg><svg x="792.9" y="623.5" width="58" height="58"><use href="#s-sleep"/></svg><svg x="523.8" y="171.3" width="34.1" height="40.1"><use href="#s-location"/></svg><svg x="528" y="267" width="131" height="100"><use href="#s-cloudy"/></svg><svg x="1312.3" y="180.4" width="32.2" height="27.3"><use href="#s-6g"/></svg><svg x="1353.3" y="176.4" width="39" height="31.3"><use href="#s-signal"/></svg><svg x="1411.3" y="174.2" width="60" height="34.4"><use href="#s-battery"/></svg><svg x="958.3" y="571" width="140.6" height="140.2"><use href="#s-acpanel"/></svg><svg x="1140" y="533.8" width="41" height="40"><use href="#s-air"/></svg><svg x="1331.7" y="536.6" width="19" height="35"><use href="#s-temp"/></svg><svg x="1415.6" y="536" width="26" height="35.5"><use href="#s-drop"/></svg><rect x="1136" y="647.9" width="60.200" height="60.200" rx="1" fill="none" stroke="#fff" stroke-width="2.1"/><svg x="1135" y="646.9" width="62" height="62"><use href="#s-ac"/></svg><rect x="1221.9" y="646.6" width="62.6" height="62.700" rx="14.500" fill="none" stroke="#fff" stroke-width="2"/><svg x="1220.9" y="645.6" width="64.6" height="64.7"><use href="#s-light"/></svg><rect x="1309.4" y="646.6" width="62.9" height="62.700" rx="14.500" fill="none" stroke="#fff" stroke-width="2"/><svg x="1308.4" y="645.6" width="64.9" height="64.7"><use href="#s-curtain"/></svg><rect x="1397" y="646.6" width="62.8" height="62.700" rx="14.500" fill="none" stroke="#fff" stroke-width="2"/><svg x="1396" y="645.6" width="64.8" height="64.7"><use href="#s-fan"/></svg><path d="M1100.23 507.17A84.25 84.25 0 1 1 1219.37 507.17" fill="none" stroke="#e7e1e5" stroke-width="19.1" stroke-linecap="round"/><path d="M1100.23 507.17A84.25 84.25 0 0 1 1087.21 490.36" fill="none" stroke="#2196f3" stroke-width="19.1" stroke-linecap="round"/><rect x="1331.800" y="335.100" width="19.400" height="188" rx="9.700" fill="#fff"/><rect x="1331.800" y="401.300" width="19.400" height="121.800" rx="9.700" fill="#ff0000"/><rect x="1419.400" y="335.100" width="19.400" height="188" rx="9.700" fill="#fff"/><rect x="1419.400" y="438.800" width="19.400" height="84.300" rx="9.700" fill="#2196f3"/><g fill="#fff" font-family="'Liberation Sans','Noto Sans CJK SC',sans-serif"><text x="570.86" y="197.8" font-size="20">武汉</text><text x="857.5" y="249.8" font-size="60" textLength="77" lengthAdjust="spacingAndGlyphs">09</text><text x="942" y="247" font-size="60">:</text><text x="963.7" y="249.8" font-size="60" textLength="70" lengthAdjust="spacingAndGlyphs">35</text><text x="1037" y="247" font-size="60">:</text><text x="1061.2" y="249.8" font-size="60" textLength="72" lengthAdjust="spacingAndGlyphs">30</text><text x="700.49" y="286.2" font-size="20">多云</text><text x="679.5" y="322.2" font-size="17.5">-15</text><text x="711.5" y="322.2" font-size="17.5">~</text><text x="728.3" y="322.2" font-size="17.5">30</text><text x="754" y="322.2" font-size="17.5">°C</text><text x="671.23" y="360.2" font-size="20">湿度</text><text x="716" y="359" font-size="20">:</text><text x="728.1" y="358.4" font-size="17.5">55</text><text x="755.9" y="358.6" font-size="19">%</text><text x="532.78" y="410.4" font-size="20">空气质量</text><text x="619" y="409.4" font-size="20">:</text><text x="629.06" y="410.4" font-size="20">优</text><text x="658.88" y="410.4" font-size="20">紫外线</text><text x="723.5" y="409.4" font-size="20">:</text><text x="733.5" y="410.4" font-size="20">0</text><text x="753.7" y="410.4" font-size="20" textLength="57" lengthAdjust="spacingAndGlyphs">PM2.5</text><text x="816" y="409.4" font-size="20">:</text><text x="826.1" y="410.4" font-size="20">15</text><text x="867.16" y="297.2" font-size="17.5" textLength="42" lengthAdjust="spacingAndGlyphs">2024</text><text x="921.25" y="297.2" font-size="20">年</text><text x="945.66" y="297.2" font-size="17.5">02</text><text x="971.72" y="297.2" font-size="20">月</text><text x="996.36" y="297.2" font-size="17.5">23</text><text x="1020.47" y="297.2" font-size="20">日</text><text x="1061.31" y="297.2" font-size="20">星期</text><text x="1105.77" y="297.2" font-size="20">五</text><text x="1318.56" y="323.1" font-size="17.5">25</text><text x="1344.1" y="323.1" font-size="17.5">°C</text><text x="1405.94" y="323.1" font-size="17.5">45</text><text x="1433.45" y="323.1" font-size="17.5">%</text><text x="1127.05" y="460.5" font-size="17.5">15</text><text x="1148.3" y="460.5" font-size="17.5" textLength="56" lengthAdjust="spacingAndGlyphs">µg/m³</text></g></svg>
<div class="b" style="left:429px;top:816.7px;width:1125px;height:342.3px;background:#1b1b1b;"></div>
<div class="b" style="left:431px;top:821px;width:100px;height:31px;background:#404040;border-radius:11px 11px 0 0;"></div>
<div class="b" style="left:532px;top:821px;width:99.5px;height:30px;background:#212121;border-radius:11px 11px 0 0;"></div>
<div class="t" style="left:461.64px;top:829.1px;font-size:13.39px;line-height:16px;letter-spacing:-0.25px;color:#f0f0f0;">Assets</div>
<div class="t" style="left:557.17px;top:829.1px;font-size:13.39px;line-height:16px;letter-spacing:-0.07px;color:#7b7b7b;">Console</div>
<div class="b" style="left:431px;top:851px;width:1121px;height:273px;background:#404040;"></div>
<div class="b" style="left:431px;top:1123.6px;width:1121px;height:32.6px;background:#2f2f2f;"></div>
<div class="t" style="left:437.2px;top:1132px;font-size:11px;line-height:16px;letter-spacing:0.21px;color:#f2f2f2;font-weight:bold;">Copy your images into the assets folder in your project folder</div>
<div class="b" style="left:1397px;top:1128.4px;width:148.4px;height:23.2px;background:#2d9e31;border-radius:11.600px;box-sizing:border-box;border:1.500px solid #3fc845;"></div>
<div class="t" style="left:1406.39px;top:1133px;font-size:12px;line-height:16px;letter-spacing:-0.34px;color:#fff;font-weight:bold;">ADD FILE INTO ASSETS</div>
<svg class="b" style="left:463.1px;top:886.8px;" width="43.7" height="36.1" preserveAspectRatio="none"><use href="#s-6g" width="43.7" height="36.1"/></svg>
<svg class="b" style="left:503px;top:869px;" width="18" height="18" viewBox="0 0 18 18"><circle cx="9" cy="9" r="8.8" fill="#2a2a2a"/><path d="M6.300 6.300L11.700 11.700M11.700 6.300L6.300 11.700" stroke="#fff" stroke-width="2" fill="none"/></svg>
<div class="t" style="left:465.84px;top:936.1px;font-size:12.36px;line-height:16px;letter-spacing:0.02px;color:#d4d4d4;">6g.png</div>
<svg class="b" style="left:542px;top:879.3px;" width="53.6" height="51.1" preserveAspectRatio="none"><use href="#s-air" width="53.6" height="51.1"/></svg>
<svg class="b" style="left:587px;top:869px;" width="18" height="18" viewBox="0 0 18 18"><circle cx="9" cy="9" r="8.8" fill="#2a2a2a"/><path d="M6.300 6.300L11.700 11.700M11.700 6.300L6.300 11.700" stroke="#fff" stroke-width="2" fill="none"/></svg>
<div class="t" style="left:549.25px;top:936.1px;font-size:12.36px;line-height:16px;letter-spacing:0.28px;color:#d4d4d4;">air.png</div>
<svg class="b" style="left:624.2px;top:876.5px;" width="57.2" height="56.4" preserveAspectRatio="none"><use href="#s-ac" width="57.2" height="56.4"/></svg>
<svg class="b" style="left:671px;top:869px;" width="18" height="18" viewBox="0 0 18 18"><circle cx="9" cy="9" r="8.8" fill="#2a2a2a"/><path d="M6.300 6.300L11.700 11.700M11.700 6.300L6.300 11.700" stroke="#fff" stroke-width="2" fill="none"/></svg>
<div class="t" style="left:613.14px;top:930.3px;font-size:12.36px;line-height:16px;letter-spacing:0.17px;color:#d4d4d4;">air_conditione</div>
<div class="t" style="left:638.11px;top:943.3px;font-size:12.36px;line-height:16px;letter-spacing:0.38px;color:#d4d4d4;">r.png</div>
<svg class="b" style="left:713px;top:881.4px;" width="47.6" height="47.6" preserveAspectRatio="none"><use href="#s-acpanel" width="47.6" height="47.6"/></svg>
<svg class="b" style="left:755px;top:869px;" width="18" height="18" viewBox="0 0 18 18"><circle cx="9" cy="9" r="8.8" fill="#2a2a2a"/><path d="M6.300 6.300L11.700 11.700M11.700 6.300L6.300 11.700" stroke="#fff" stroke-width="2" fill="none"/></svg>
<div class="t" style="left:697.14px;top:930.3px;font-size:12.36px;line-height:16px;letter-spacing:0.17px;color:#d4d4d4;">air_conditione</div>
<div class="t" style="left:703.84px;top:943.3px;font-size:12.36px;line-height:16px;letter-spacing:0.06px;color:#d4d4d4;">r_panel.png</div>
<svg class="b" style="left:793.7px;top:882.3px;" width="54.3" height="42.7" preserveAspectRatio="none"><use href="#s-home" width="54.3" height="42.7"/></svg>
<svg class="b" style="left:839px;top:869px;" width="18" height="18" viewBox="0 0 18 18"><circle cx="9" cy="9" r="8.8" fill="#2a2a2a"/><path d="M6.300 6.300L11.700 11.700M11.700 6.300L6.300 11.700" stroke="#fff" stroke-width="2" fill="none"/></svg>
<div class="t" style="left:795.54px;top:936.1px;font-size:12.36px;line-height:16px;letter-spacing:0.05px;color:#d4d4d4;">back.png</div>
<svg class="b" style="left:878px;top:889.8px;" width="53.3" height="30.2" preserveAspectRatio="none"><use href="#s-battery" width="53.3" height="30.2"/></svg>
<svg class="b" style="left:923px;top:869px;" width="18" height="18" viewBox="0 0 18 18"><circle cx="9" cy="9" r="8.8" fill="#2a2a2a"/><path d="M6.300 6.300L11.700 11.700M11.700 6.300L6.300 11.700" stroke="#fff" stroke-width="2" fill="none"/></svg>
<div class="t" style="left:872.71px;top:936.1px;font-size:12.36px;line-height:16px;letter-spacing:0.3px;color:#d4d4d4;">battery.png</div>
<svg class="b" style="left:967.5px;top:887.7px;" width="46" height="35.3" preserveAspectRatio="none"><use href="#s-cloudy" width="46" height="35.3"/></svg>
<svg class="b" style="left:1007px;top:869px;" width="18" height="18" viewBox="0 0 18 18"><circle cx="9" cy="9" r="8.8" fill="#2a2a2a"/><path d="M6.300 6.300L11.700 11.700M11.700 6.300L6.300 11.700" stroke="#fff" stroke-width="2" fill="none"/></svg>
<div class="t" style="left:958.42px;top:936.1px;font-size:12.36px;line-height:16px;letter-spacing:0.19px;color:#d4d4d4;">cloudy.png</div>
<svg class="b" style="left:1028px;top:859.7px;" width="89.6" height="89.3" preserveAspectRatio="none"><use href="#s-curtain" width="89.6" height="89.3"/></svg>
<svg class="b" style="left:1091px;top:869px;" width="18" height="18" viewBox="0 0 18 18"><circle cx="9" cy="9" r="8.8" fill="#2a2a2a"/><path d="M6.300 6.300L11.700 11.700M11.700 6.300L6.300 11.700" stroke="#fff" stroke-width="2" fill="none"/></svg>
<div class="t" style="left:1040.91px;top:936.1px;font-size:12.36px;line-height:16px;letter-spacing:0.24px;color:#d4d4d4;">curtain.png</div>
<svg class="b" style="left:1130px;top:882.3px;" width="53.6" height="45.1" preserveAspectRatio="none"><use href="#s-sofa" width="53.6" height="45.1"/></svg>
<svg class="b" style="left:1175px;top:869px;" width="18" height="18" viewBox="0 0 18 18"><circle cx="9" cy="9" r="8.8" fill="#2a2a2a"/><path d="M6.300 6.300L11.700 11.700M11.700 6.300L6.300 11.700" stroke="#fff" stroke-width="2" fill="none"/></svg>
<div class="t" style="left:1128.3px;top:936.1px;font-size:12.36px;line-height:16px;letter-spacing:0.25px;color:#d4d4d4;">home.png</div>
<svg class="b" style="left:1223.4px;top:881.4px;" width="35.5" height="46.6" preserveAspectRatio="none"><use href="#s-drop" width="35.5" height="46.6"/></svg>
<svg class="b" style="left:1259px;top:869px;" width="18" height="18" viewBox="0 0 18 18"><circle cx="9" cy="9" r="8.8" fill="#2a2a2a"/><path d="M6.300 6.300L11.700 11.700M11.700 6.300L6.300 11.700" stroke="#fff" stroke-width="2" fill="none"/></svg>
<div class="t" style="left:1204px;top:936.1px;font-size:12.36px;line-height:16px;letter-spacing:0.37px;color:#d4d4d4;">humidity.png</div>
<svg class="b" style="left:1299.5px;top:883.8px;--bg:#404040;" width="53.3" height="43.6" preserveAspectRatio="none"><use href="#s-leave" width="53.3" height="43.6"/></svg>
<svg class="b" style="left:1343px;top:869px;" width="18" height="18" viewBox="0 0 18 18"><circle cx="9" cy="9" r="8.8" fill="#2a2a2a"/><path d="M6.300 6.300L11.700 11.700M11.700 6.300L6.300 11.700" stroke="#fff" stroke-width="2" fill="none"/></svg>
<div class="t" style="left:1297.96px;top:936.1px;font-size:12.36px;line-height:16px;letter-spacing:0.01px;color:#d4d4d4;">leave.png</div>
<svg class="b" style="left:1365.5px;top:861.2px;" width="86.7" height="86.6" preserveAspectRatio="none"><use href="#s-light" width="86.7" height="86.6"/></svg>
<svg class="b" style="left:1427px;top:869px;" width="18" height="18" viewBox="0 0 18 18"><circle cx="9" cy="9" r="8.8" fill="#2a2a2a"/><path d="M6.300 6.300L11.700 11.700M11.700 6.300L6.300 11.700" stroke="#fff" stroke-width="2" fill="none"/></svg>
<div class="t" style="left:1384.43px;top:936.1px;font-size:12.36px;line-height:16px;letter-spacing:0.22px;color:#d4d4d4;">light.png</div>
<svg class="b" style="left:1465.8px;top:882.3px;" width="54.2" height="44.5" preserveAspectRatio="none"><use href="#s-signal" width="54.2" height="44.5"/></svg>
<svg class="b" style="left:1511px;top:869px;" width="18" height="18" viewBox="0 0 18 18"><circle cx="9" cy="9" r="8.8" fill="#2a2a2a"/><path d="M6.300 6.300L11.700 11.700M11.700 6.300L6.300 11.700" stroke="#fff" stroke-width="2" fill="none"/></svg>
<div class="t" style="left:1464.35px;top:936.1px;font-size:12.36px;line-height:16px;letter-spacing:0.05px;color:#d4d4d4;">signal.png</div>
<svg class="b" style="left:458px;top:986.2px;" width="54" height="53.3" preserveAspectRatio="none"><use href="#s-sleep" width="54" height="53.3"/></svg>
<svg class="b" style="left:503px;top:976.8px;" width="18" height="18" viewBox="0 0 18 18"><circle cx="9" cy="9" r="8.8" fill="#2a2a2a"/><path d="M6.300 6.300L11.700 11.700M11.700 6.300L6.300 11.700" stroke="#fff" stroke-width="2" fill="none"/></svg>
<div class="t" style="left:457.77px;top:1044.4px;font-size:12.36px;line-height:16px;letter-spacing:0.05px;color:#d4d4d4;">sleep.png</div>
<svg class="b" style="left:546.5px;top:991.2px;" width="44" height="44.1" preserveAspectRatio="none"><use href="#s-fonta" width="44" height="44.1"/></svg>
<svg class="b" style="left:587px;top:976.8px;" width="18" height="18" viewBox="0 0 18 18"><circle cx="9" cy="9" r="8.8" fill="#2a2a2a"/><path d="M6.300 6.300L11.700 11.700M11.700 6.300L6.300 11.700" stroke="#fff" stroke-width="2" fill="none"/></svg>
<div class="t" style="left:531.57px;top:1038.1px;font-size:12.36px;line-height:16px;letter-spacing:-0.23px;color:#d4d4d4;">SourceHanSa</div>
<div class="t" style="left:531.9px;top:1051.1px;font-size:12.36px;line-height:16px;letter-spacing:-0.32px;color:#d4d4d4;">nsSC-Regular</div>
<svg class="b" style="left:639.9px;top:990px;" width="25.9" height="46.4" preserveAspectRatio="none"><use href="#s-temp" width="25.9" height="46.4"/></svg>
<svg class="b" style="left:671px;top:976.8px;" width="18" height="18" viewBox="0 0 18 18"><circle cx="9" cy="9" r="8.8" fill="#2a2a2a"/><path d="M6.300 6.300L11.700 11.700M11.700 6.300L6.300 11.700" stroke="#fff" stroke-width="2" fill="none"/></svg>
<div class="t" style="left:615.93px;top:1038.1px;font-size:12.36px;line-height:16px;letter-spacing:0.3px;color:#d4d4d4;">temperature.</div>
<div class="t" style="left:642.15px;top:1051.1px;font-size:12.36px;line-height:16px;letter-spacing:0.22px;color:#d4d4d4;">png</div>
<svg class="b" style="left:708.5px;top:987.2px;" width="54" height="50" preserveAspectRatio="none"><use href="#s-edit-w" width="54" height="50"/></svg>
<svg class="b" style="left:755px;top:976.8px;" width="18" height="18" viewBox="0 0 18 18"><circle cx="9" cy="9" r="8.8" fill="#2a2a2a"/><path d="M6.300 6.300L11.700 11.700M11.700 6.300L6.300 11.700" stroke="#fff" stroke-width="2" fill="none"/></svg>
<div class="t" style="left:697.21px;top:1038.1px;font-size:12.36px;line-height:16px;letter-spacing:0.01px;color:#d4d4d4;">ui_font_Font1.</div>
<div class="t" style="left:727.92px;top:1051.1px;font-size:12.36px;line-height:16px;letter-spacing:0.42px;color:#d4d4d4;">bin</div>
<svg class="b" style="left:792.3px;top:987.2px;" width="54" height="50" preserveAspectRatio="none"><use href="#s-edit-o" width="54" height="50"/></svg>
<svg class="b" style="left:839px;top:976.8px;" width="18" height="18" viewBox="0 0 18 18"><circle cx="9" cy="9" r="8.8" fill="#2a2a2a"/><path d="M6.300 6.300L11.700 11.700M11.700 6.300L6.300 11.700" stroke="#fff" stroke-width="2" fill="none"/></svg>
<div class="t" style="left:781.21px;top:1038.1px;font-size:12.36px;line-height:16px;letter-spacing:0.01px;color:#d4d4d4;">ui_font_Font1.</div>
<div class="t" style="left:810.59px;top:1051.1px;font-size:12.36px;line-height:16px;letter-spacing:0.12px;color:#d4d4d4;">fcfg</div>
<svg class="b" style="left:860.9px;top:968.1px;" width="88.8" height="88.6" preserveAspectRatio="none"><use href="#s-fan" width="88.8" height="88.6"/></svg>
<svg class="b" style="left:923px;top:976.8px;" width="18" height="18" viewBox="0 0 18 18"><circle cx="9" cy="9" r="8.8" fill="#2a2a2a"/><path d="M6.300 6.300L11.700 11.700M11.700 6.300L6.300 11.700" stroke="#fff" stroke-width="2" fill="none"/></svg>
<div class="t" style="left:868.53px;top:1044.4px;font-size:12.36px;line-height:16px;letter-spacing:0.19px;color:#d4d4d4;">ventilate.png</div>
<svg class="b" style="left:961.5px;top:989.2px;--bg:#404040;" width="55" height="48.1" preserveAspectRatio="none"><use href="#s-visitor" width="55" height="48.1"/></svg>
<svg class="b" style="left:1007px;top:976.8px;" width="18" height="18" viewBox="0 0 18 18"><circle cx="9" cy="9" r="8.8" fill="#2a2a2a"/><path d="M6.300 6.300L11.700 11.700M11.700 6.300L6.300 11.700" stroke="#fff" stroke-width="2" fill="none"/></svg>
<div class="t" style="left:959.46px;top:1044.4px;font-size:12.36px;line-height:16px;letter-spacing:0.28px;color:#d4d4d4;">visitor.png</div>
<svg class="b" style="left:1047.8px;top:987.7px;" width="50" height="50.3" preserveAspectRatio="none"><use href="#s-sunny" width="50" height="50.3"/></svg>
<svg class="b" style="left:1091px;top:976.8px;" width="18" height="18" viewBox="0 0 18 18"><circle cx="9" cy="9" r="8.8" fill="#2a2a2a"/><path d="M6.300 6.300L11.700 11.700M11.700 6.300L6.300 11.700" stroke="#fff" stroke-width="2" fill="none"/></svg>
<div class="t" style="left:1043.86px;top:1044.4px;font-size:12.36px;line-height:16px;letter-spacing:0.19px;color:#d4d4d4;">sunny.png</div>
<svg class="b" style="left:1133.9px;top:986.2px;" width="46.4" height="54.1" preserveAspectRatio="none"><use href="#s-location" width="46.4" height="54.1"/></svg>
<svg class="b" style="left:1175px;top:976.8px;" width="18" height="18" viewBox="0 0 18 18"><circle cx="9" cy="9" r="8.8" fill="#2a2a2a"/><path d="M6.300 6.300L11.700 11.700M11.700 6.300L6.300 11.700" stroke="#fff" stroke-width="2" fill="none"/></svg>
<div class="t" style="left:1122.28px;top:1044.4px;font-size:12.36px;line-height:16px;letter-spacing:0.2px;color:#d4d4d4;">location.png</div>
<svg class="b" style="left:1214.9px;top:992.8px;" width="52.1" height="40.6" preserveAspectRatio="none"><use href="#s-folder" width="52.1" height="40.6"/></svg>
<div class="t" style="left:1226.26px;top:1044.4px;font-size:12.36px;line-height:16px;letter-spacing:0.05px;color:#d4d4d4;">icons</div>
<div class="b" style="left:1554px;top:43px;width:490px;height:1116px;background:#1b1b1b;"></div>
<div class="b" style="left:2043px;top:43px;width:1px;height:1116px;background:#333333;"></div>
<div class="b" style="left:1556px;top:46px;width:100px;height:31px;background:#404040;border-radius:11px 11px 0 0;"></div>
<div class="b" style="left:1657px;top:46px;width:99px;height:30px;background:#212121;border-radius:11px 11px 0 0;"></div>
<div class="t" style="left:1684.31px;top:54.1px;font-size:13.39px;line-height:16px;letter-spacing:0.25px;color:#7b7b7b;">History</div>
<div class="b" style="left:1757px;top:46px;width:99px;height:30px;background:#212121;border-radius:11px 11px 0 0;"></div>
<div class="t" style="left:1763.8px;top:54.1px;font-size:13.39px;line-height:16px;letter-spacing:0.09px;color:#7b7b7b;">Font Manager</div>
<div class="b" style="left:1857px;top:46px;width:99px;height:30px;background:#212121;border-radius:11px 11px 0 0;"></div>
<div class="t" style="left:1874.74px;top:54.1px;font-size:13.39px;line-height:16px;letter-spacing:0.33px;color:#7b7b7b;">Animation</div>
<div class="t" style="left:1577px;top:54.1px;font-size:13.39px;line-height:16px;letter-spacing:0.21px;color:#f0f0f0;">Inspector</div>
<div class="b" style="left:1556px;top:76px;width:486px;height:7px;background:#404040;"></div>
<div class="b" style="left:1556px;top:82.7px;width:486px;height:1073.3px;background:#383838;border-radius:0 0 9px 0;"></div>
<div class="b" style="left:1556px;top:82.7px;width:486px;height:23.3px;background:#2f2f2f;"></div>
<svg class="b" style="left:1561.3px;top:91.35px;" width="7" height="6.4" viewBox="0 0 7 6.4"><path d="M0 0H7 L3.5 6.4Z" fill="#f0f0f0"/></svg>
<div class="t" style="left:1574px;top:86.35px;font-size:12.3px;line-height:16px;letter-spacing:-0.79px;color:#f4f4f4;font-weight:bold;">SCREEN</div>
<div class="t" style="left:1574px;top:119.1px;font-size:12.36px;line-height:16px;letter-spacing:0.16px;color:#b4b4b4;">Name</div>
<div class="b" style="left:1575px;top:135.3px;width:448px;height:21.5px;background:#525252;border-radius:3.500px;"></div>
<div class="t" style="left:1582.6px;top:138.1px;font-size:12px;line-height:16px;letter-spacing:0.28px;color:#fafafa;font-weight:bold;">ScreenMain</div>
<svg class="b" style="left:1577px;top:175.6px;" width="7" height="6" viewBox="0 0 7 6"><path d="M0 0H7 L3.5 6Z" fill="#e4e4e4"/></svg>
<div class="t" style="left:1590px;top:171px;font-size:12px;line-height:16px;letter-spacing:0.34px;color:#e0e0e0;font-weight:bold;">Layout</div>
<div class="b" style="left:1638.5px;top:176.9px;width:385.3px;height:1px;background:#858585;"></div>
<div class="t" style="left:1574px;top:191.1px;font-size:12.36px;line-height:16px;letter-spacing:-0.24px;color:#b4b4b4;">Flex Flow</div>
<div class="b" style="left:1575px;top:207.5px;width:448px;height:21.5px;background:#525252;border-radius:3.500px;"></div>
<div class="t" style="left:1582.6px;top:210.3px;font-size:12px;line-height:16px;letter-spacing:0.34px;color:#fafafa;font-weight:bold;">No Layout</div>
<svg class="b" style="left:2004.7px;top:215.1px;" width="7.6" height="6.4" viewBox="0 0 7.6 6.4"><path d="M0 0H7.6 L3.8 6.4Z" fill="#f2f2f2"/></svg>
<svg class="b" style="left:1577px;top:247.6px;" width="7" height="6" viewBox="0 0 7 6"><path d="M0 0H7 L3.5 6Z" fill="#e4e4e4"/></svg>
<div class="t" style="left:1590px;top:243px;font-size:12px;line-height:16px;letter-spacing:-0.22px;color:#e0e0e0;font-weight:bold;">Flags</div>
<div class="b" style="left:1628px;top:248.9px;width:395.8px;height:1px;background:#858585;"></div>
<div class="b" style="left:1579px;top:266.2px;width:16px;height:16px;background:#555555;border-radius:3.500px;"></div>
<div class="t" style="left:1604px;top:266.8px;font-size:12.36px;line-height:16px;letter-spacing:0.25px;color:#dadada;">Hidden</div>
<svg class="b" style="left:1579px;top:290.2px;" width="16" height="16" viewBox="0 0 16 16"><rect width="16" height="16" rx="3.500" fill="#2fb437"/><path d="M4 8.200L6.900 11L12.200 5.200" fill="none" stroke="#fff" stroke-width="2"/></svg>
<div class="t" style="left:1604px;top:290.8px;font-size:12.36px;line-height:16px;letter-spacing:-0.08px;color:#dadada;">Clickable</div>
<div class="b" style="left:1579px;top:314.2px;width:16px;height:16px;background:#555555;border-radius:3.500px;"></div>
<div class="t" style="left:1604px;top:314.8px;font-size:12.36px;line-height:16px;letter-spacing:-0.1px;color:#dadada;">Checkable</div>
<svg class="b" style="left:1579px;top:338.2px;" width="16" height="16" viewBox="0 0 16 16"><rect width="16" height="16" rx="3.500" fill="#2fb437"/><path d="M4 8.200L6.900 11L12.200 5.200" fill="none" stroke="#fff" stroke-width="2"/></svg>
<div class="t" style="left:1604px;top:338.8px;font-size:12.36px;line-height:16px;letter-spacing:-0.15px;color:#dadada;">Press lock</div>
<div class="b" style="left:1579px;top:362.2px;width:16px;height:16px;background:#555555;border-radius:3.500px;"></div>
<div class="t" style="left:1604px;top:362.8px;font-size:12.36px;line-height:16px;letter-spacing:0.18px;color:#dadada;">Adv hittest</div>
<div class="b" style="left:1579px;top:386.2px;width:16px;height:16px;background:#555555;border-radius:3.500px;"></div>
<div class="t" style="left:1604px;top:386.8px;font-size:12.36px;line-height:16px;letter-spacing:0.17px;color:#dadada;">Ignore layout</div>
<div class="b" style="left:1579px;top:410.2px;width:16px;height:16px;background:#555555;border-radius:3.500px;"></div>
<div class="t" style="left:1604px;top:410.8px;font-size:12.36px;line-height:16px;letter-spacing:0.12px;color:#dadada;">Overflow visible</div>
<div class="b" style="left:1579px;top:434.2px;width:16px;height:16px;background:#555555;border-radius:3.500px;"></div>
<div class="t" style="left:1604px;top:434.8px;font-size:12.36px;line-height:16px;letter-spacing:-0.01px;color:#dadada;">Flex in new track</div>
<div class="b" style="left:1596px;top:465.6px;width:427.8px;height:1px;background:#858585;"></div>
<div class="b" style="left:1579px;top:489.5px;width:16px;height:16px;background:#555555;border-radius:3.500px;"></div>
<div class="t" style="left:1604px;top:490.1px;font-size:12.36px;line-height:16px;letter-spacing:-0.02px;color:#dadada;">Scrollable</div>
<svg class="b" style="left:1579px;top:513.5px;" width="16" height="16" viewBox="0 0 16 16"><rect width="16" height="16" rx="3.500" fill="#2fb437"/><path d="M4 8.200L6.900 11L12.200 5.200" fill="none" stroke="#fff" stroke-width="2"/></svg>
<div class="t" style="left:1604px;top:514.1px;font-size:12.36px;line-height:16px;letter-spacing:-0.06px;color:#dadada;">Scroll elastic</div>
<svg class="b" style="left:1579px;top:537.5px;" width="16" height="16" viewBox="0 0 16 16"><rect width="16" height="16" rx="3.500" fill="#2fb437"/><path d="M4 8.200L6.900 11L12.200 5.200" fill="none" stroke="#fff" stroke-width="2"/></svg>
<div class="t" style="left:1604px;top:538.1px;font-size:12.36px;line-height:16px;letter-spacing:0.24px;color:#dadada;">Scroll momentum</div>
<div class="b" style="left:1579px;top:561.5px;width:16px;height:16px;background:#555555;border-radius:3.500px;"></div>
<div class="t" style="left:1604px;top:562.1px;font-size:12.36px;line-height:16px;letter-spacing:0.14px;color:#dadada;">Scroll with arrow</div>
<div class="b" style="left:1579px;top:584.7px;width:16px;height:16px;background:#555555;border-radius:3.500px;"></div>
<div class="t" style="left:1604px;top:585.3px;font-size:12.36px;line-height:16px;letter-spacing:-0.02px;color:#dadada;">Scroll one</div>
<div class="b" style="left:1596px;top:616px;width:427.8px;height:1px;background:#858585;"></div>
<div class="t" style="left:1574px;top:636.2px;font-size:12.36px;line-height:16px;letter-spacing:0.12px;color:#b4b4b4;">Scrollbar mode</div>
<div class="b" style="left:1575px;top:656.2px;width:448px;height:21.5px;background:#525252;border-radius:3.500px;"></div>
<div class="t" style="left:1582.6px;top:659px;font-size:12px;line-height:16px;letter-spacing:-0.04px;color:#fafafa;font-weight:bold;">AUTO</div>
<svg class="b" style="left:2004.7px;top:663.8px;" width="7.6" height="6.4" viewBox="0 0 7.6 6.4"><path d="M0 0H7.6 L3.8 6.4Z" fill="#f2f2f2"/></svg>
<div class="t" style="left:1574px;top:684.1px;font-size:12.36px;line-height:16px;letter-spacing:0.11px;color:#b4b4b4;">Scroll direction</div>
<div class="b" style="left:1575px;top:704.2px;width:448px;height:21.5px;background:#525252;border-radius:3.500px;"></div>
<div class="t" style="left:1582.6px;top:707px;font-size:12px;line-height:16px;letter-spacing:-0.5px;color:#fafafa;font-weight:bold;">ALL</div>
<svg class="b" style="left:2004.7px;top:711.8px;" width="7.6" height="6.4" viewBox="0 0 7.6 6.4"><path d="M0 0H7.6 L3.8 6.4Z" fill="#f2f2f2"/></svg>
<svg class="b" style="left:1577px;top:740.2px;" width="7" height="6" viewBox="0 0 7 6"><path d="M0 0H7 L3.5 6Z" fill="#e4e4e4"/></svg>
<div class="t" style="left:1590px;top:735.6px;font-size:12px;line-height:16px;letter-spacing:0.22px;color:#e0e0e0;font-weight:bold;">States</div>
<div class="b" style="left:1634px;top:741.5px;width:389.8px;height:1px;background:#858585;"></div>
<div class="b" style="left:1579px;top:759.5px;width:16px;height:16px;background:#555555;border-radius:3.500px;"></div>
<div class="t" style="left:1604px;top:760.1px;font-size:12.36px;line-height:16px;letter-spacing:-0.18px;color:#dadada;">Checked</div>
<div class="b" style="left:1579px;top:783.5px;width:16px;height:16px;background:#555555;border-radius:3.500px;"></div>
<div class="t" style="left:1604px;top:784.1px;font-size:12.36px;line-height:16px;letter-spacing:-0.15px;color:#dadada;">Focused</div>
<div class="b" style="left:1579px;top:807.5px;width:16px;height:16px;background:#555555;border-radius:3.500px;"></div>
<div class="t" style="left:1604px;top:808.1px;font-size:12.36px;line-height:16px;letter-spacing:-0.17px;color:#dadada;">Pressed</div>
<div class="b" style="left:1579px;top:831.5px;width:16px;height:16px;background:#555555;border-radius:3.500px;"></div>
<div class="t" style="left:1604px;top:832.1px;font-size:12.36px;line-height:16px;letter-spacing:-0.06px;color:#dadada;">User 1</div>
<div class="b" style="left:1579px;top:855.5px;width:16px;height:16px;background:#555555;border-radius:3.500px;"></div>
<div class="t" style="left:1604px;top:856.1px;font-size:12.36px;line-height:16px;letter-spacing:-0.06px;color:#dadada;">User 2</div>
<div class="b" style="left:1579px;top:879.5px;width:16px;height:16px;background:#555555;border-radius:3.500px;"></div>
<div class="t" style="left:1604px;top:880.1px;font-size:12.36px;line-height:16px;letter-spacing:-0.06px;color:#dadada;">User 3</div>
<div class="b" style="left:1579px;top:903.5px;width:16px;height:16px;background:#555555;border-radius:3.500px;"></div>
<div class="t" style="left:1604px;top:904.1px;font-size:12.36px;line-height:16px;letter-spacing:-0.06px;color:#dadada;">User 4</div>
<svg class="b" style="left:1577px;top:932.2px;" width="7" height="6" viewBox="0 0 7 6"><path d="M0 0H7 L3.5 6Z" fill="#e4e4e4"/></svg>
<div class="t" style="left:1590px;top:927.6px;font-size:12px;line-height:16px;letter-spacing:0.01px;color:#e0e0e0;font-weight:bold;">Screen</div>
<div class="b" style="left:1637px;top:933.5px;width:386.8px;height:1px;background:#858585;"></div>
<div class="b" style="left:1579px;top:951.6px;width:16px;height:16px;background:#555555;border-radius:3.500px;"></div>
<div class="t" style="left:1604px;top:952.2px;font-size:12.36px;line-height:16px;letter-spacing:0.24px;color:#dadada;">Temporary</div>
<div class="b" style="left:1579px;top:975.7px;width:16px;height:16px;background:#555555;border-radius:3.500px;"></div>
<div class="t" style="left:1604px;top:976.3px;font-size:12.36px;line-height:16px;letter-spacing:0.16px;color:#dadada;">Don't export screen</div>
<div class="b" style="left:1556px;top:1006.3px;width:486px;height:2.5px;background:#3e3e3e;"></div>
<div class="b" style="left:1556px;top:1008.7px;width:486px;height:23.7px;background:#2f2f2f;"></div>
<svg class="b" style="left:1561.3px;top:1017.55px;" width="7" height="6.4" viewBox="0 0 7 6.4"><path d="M0 0H7 L3.5 6.4Z" fill="#f0f0f0"/></svg>
<div class="t" style="left:1574px;top:1012.55px;font-size:12.3px;line-height:16px;letter-spacing:-0.57px;color:#f4f4f4;font-weight:bold;">STYLE SETTINGS</div>
<div class="t" style="left:1574px;top:1045.9px;font-size:12.36px;line-height:16px;letter-spacing:-1.11px;color:#b4b4b4;">STATE</div>
<div class="b" style="left:1575px;top:1064.3px;width:448px;height:21.5px;background:#525252;border-radius:3.500px;"></div>
<div class="t" style="left:1582.6px;top:1067.1px;font-size:12px;line-height:16px;letter-spacing:-0.24px;color:#fafafa;font-weight:bold;">DEFAULT</div>
<svg class="b" style="left:2004.7px;top:1071.9px;" width="7.6" height="6.4" viewBox="0 0 7.6 6.4"><path d="M0 0H7.6 L3.8 6.4Z" fill="#f2f2f2"/></svg>
<div class="b" style="left:1574px;top:1105px;width:449.8px;height:51px;background:#404040;"></div>
<svg class="b" style="left:1578.9px;top:1114.1px;" width="7.4" height="6.4" viewBox="0 0 7.4 6.4"><path d="M0 0H7.4 L3.7 6.4Z" fill="#f0f0f0"/></svg>
<div class="t" style="left:1592px;top:1109.5px;font-size:12.3px;line-height:16px;letter-spacing:-0.13px;color:#f4f4f4;font-weight:bold;">STYLE (MAIN)</div>
<svg class="b" style="left:1607.7px;top:1141.9px;" width="6.2" height="7.4" viewBox="0 0 6.2 7.4"><path d="M0 0V7.4 L6.2 3.7Z" fill="#e4e4e4"/></svg>
<div class="t" style="left:1620px;top:1137.6px;font-size:12px;line-height:16px;letter-spacing:0.17px;color:#e0e0e0;font-weight:bold;">Background</div>
<div class="b" style="left:1697px;top:1144.3px;width:297px;height:1px;background:#858585;"></div>
<div class="b" style="left:2032px;top:84px;width:8px;height:729px;background:#505050;border-radius:4px;"></div>
<div class="b" style="left:0px;top:1157.6px;width:2044px;height:1.4px;background:#0a0a0a;"></div>
</body></html>
